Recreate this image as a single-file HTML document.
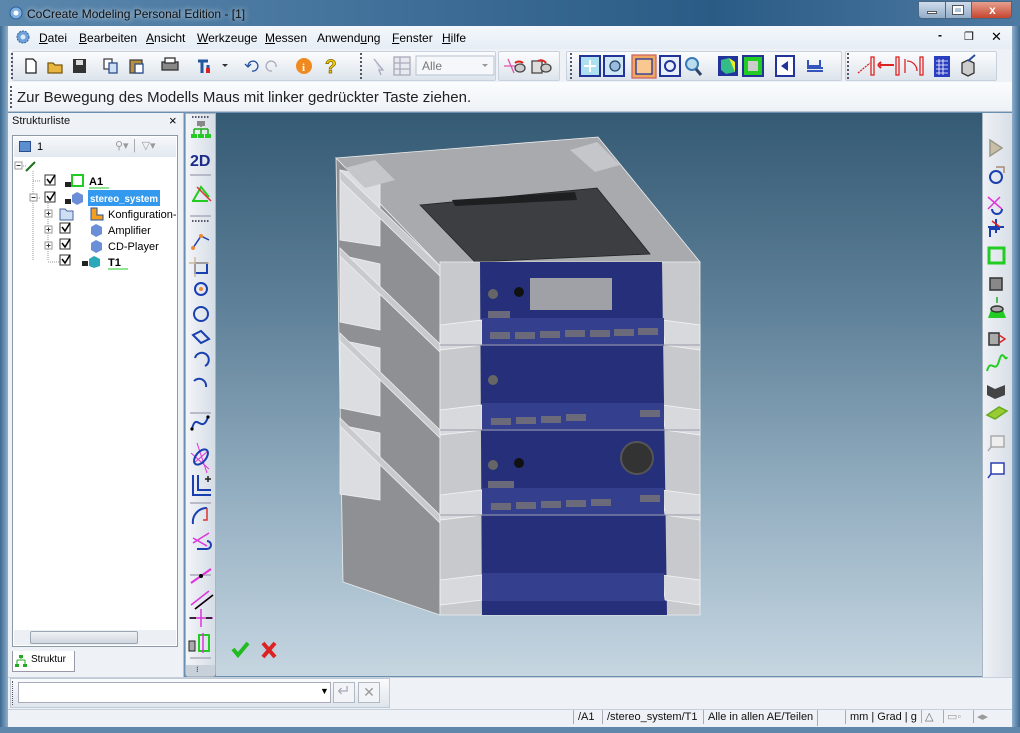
<!DOCTYPE html>
<html><head><meta charset="utf-8"><style>
*{margin:0;padding:0;box-sizing:border-box}
body{width:1020px;height:733px;overflow:hidden;font-family:"Liberation Sans",sans-serif;font-size:12px;background:#6a8fb0;position:relative}
.a{position:absolute}
.title{left:0;top:0;width:1020px;height:27px;background:linear-gradient(90deg,#5b87ad 0%,#3f6f98 40%,#2a5b86 70%,#4d7aa2 100%)}
.menu{left:8px;top:26px;width:1004px;height:23px;background:linear-gradient(#f4f8fc,#e6edf5);font-size:12px}
.menu span{position:absolute;top:5px}
.tb{left:8px;top:49px;width:1004px;height:33px;background:#eef2f7}
.tbi{top:51px;height:30px;background:linear-gradient(#fbfcfd,#dde4ec);border:1px solid #c8d2de;border-radius:2px}
.msg{left:8px;top:82px;width:1004px;height:30px;background:linear-gradient(#fafcfe,#eef2f6);border-bottom:1px solid #b7c3d0;font-size:15px;color:#222}
.vp{left:216px;top:113px;width:766px;height:563px;background:linear-gradient(#355a74 0%,#5f8199 35%,#97b1c3 70%,#c6d6e1 100%)}
</style></head><body>
<div class="a title"></div>
<svg class="a" style="left:8px;top:5px" width="16" height="16"><circle cx="8" cy="8" r="6" fill="#7fb0e0" stroke="#2d5f9c"/><circle cx="8" cy="8" r="2.5" fill="#fff"/></svg>
<div class="a" style="left:27px;top:7px;color:#111;font-size:12px;text-shadow:0 0 6px #fff">CoCreate Modeling Personal Edition - [1]</div>
<div class="a" style="left:918px;top:1px;width:94px;height:18px;border-radius:0 0 4px 4px;overflow:hidden;border:1px solid #4a6680">
<div class="a" style="left:0;top:0;width:26px;height:17px;background:linear-gradient(#cfdceb,#8eaac6)"></div>
<div class="a" style="left:26px;top:0;width:26px;height:17px;background:linear-gradient(#cfdceb,#8eaac6);border-left:1px solid #4a6680"></div>
<div class="a" style="left:52px;top:0;width:42px;height:17px;background:linear-gradient(#e6a08e,#c4402a);border-left:1px solid #4a6680;color:#fff;text-align:center;font-weight:bold;font-size:12px;line-height:16px">x</div>
<div class="a" style="left:8px;top:9px;width:10px;height:3px;background:#fff;border:1px solid #555"></div>
<div class="a" style="left:34px;top:4px;width:10px;height:8px;border:2px solid #fff;outline:1px solid #555"></div>
</div>
<div class="a" style="left:0;top:26px;width:8px;height:707px;background:linear-gradient(90deg,#3d6a92,#8eaecb)"></div>
<div class="a" style="left:1012px;top:26px;width:8px;height:707px;background:linear-gradient(90deg,#8eaecb,#3d6a92)"></div>
<div class="a" style="left:0;top:727px;width:1020px;height:6px;background:#5f86ab"></div>

<div class="a menu">
<svg class="a" style="left:6px;top:3px" width="18" height="17"><circle cx="9" cy="8" r="6" fill="#6fa0d8" stroke="#2d5f9c" stroke-dasharray="2 1"/><circle cx="9" cy="8" r="2.5" fill="#dce9f8"/></svg>
<span style="left:31px"><u>D</u>atei</span><span style="left:71px"><u>B</u>earbeiten</span><span style="left:138px"><u>A</u>nsicht</span><span style="left:189px"><u>W</u>erkzeuge</span><span style="left:257px"><u>M</u>essen</span><span style="left:309px">Anwend<u>u</u>ng</span><span style="left:384px"><u>F</u>enster</span><span style="left:434px"><u>H</u>ilfe</span>
<span style="left:930px;top:2px;font-weight:bold">-</span><span style="left:956px;top:4px;font-size:11px">&#x2750;</span><span style="left:983px;top:3px;font-size:13px">&#x2715;</span>
</div>
<div class="a tb"></div>
<div class="a tbi" style="left:12px;width:484px"></div>
<div class="a tbi" style="left:498px;width:62px"></div>
<div class="a tbi" style="left:566px;width:276px"></div>
<div class="a tbi" style="left:845px;width:152px"></div>
<svg class="a" style="left:12px;top:51px" width="990" height="30">
<g fill="none" stroke-width="1.3">
<path d="M14 8h7l3 3v11h-10z" stroke="#222" fill="#fff"/>
<path d="M36 12h5l2 2h7v8h-14z" fill="#e8b63e" stroke="#7a5a10"/>
<rect x="61" y="8" width="13" height="14" fill="#333"/><rect x="64" y="9" width="7" height="5" fill="#ddd"/>
<rect x="92" y="8" width="8" height="10" fill="#fff" stroke="#444"/><rect x="97" y="12" width="8" height="10" fill="#cfe0f4" stroke="#2a4d8a"/>
<rect x="118" y="9" width="12" height="13" fill="#b98f3e" stroke="#444"/><rect x="123" y="13" width="8" height="9" fill="#fff" stroke="#2a4d8a"/>
<rect x="150" y="11" width="16" height="8" fill="#888" stroke="#333"/><rect x="153" y="7" width="10" height="5" fill="#fff" stroke="#333"/>
<path d="M186 10h10M190 10v12M196 14v8" stroke="#2355a0" stroke-width="3"/><rect x="194" y="17" width="4" height="5" fill="#d22" stroke="none"/>
<path d="M210 13l3 3 3-3z" fill="#333" stroke="none"/>
<path d="M236 16a5 5 0 1 1 4 4M233 13l3 3 3-3" stroke="#2450a0"/>
<path d="M264 16a5 5 0 1 0 -4 4" stroke="#aab"/>
<circle cx="292" cy="15" r="8" fill="#f08a20"/><text x="290" y="20" font-size="11" font-weight="bold" fill="#fff" font-family="Liberation Serif">i</text>
<text x="313" y="22" font-size="19" font-weight="bold" fill="#f0d000" stroke="#806000" stroke-width=".7">?</text>
<path d="M362 8l9 11h-4l2 5" stroke="#aab" fill="#dde"/>
<rect x="382" y="6" width="16" height="18" fill="#e7ebef" stroke="#aab"/>
<path d="M382 12h16M382 18h16M388 6v18" stroke="#aab"/>
</g>
<rect x="404" y="5" width="78" height="19" fill="#f5f7fa" stroke="#b9c3cf"/>
<text x="410" y="19" font-size="12" fill="#777" font-family="Liberation Sans">Alle</text>
<path d="M470 13l3 3 3-3z" fill="#999"/>
<g fill="none" stroke-width="1.3">
<path d="M496 8l6 14M492 15h14" stroke="#d5a" /><ellipse cx="508" cy="17" rx="5" ry="4" fill="#ccc" stroke="#444"/><path d="M503 12a6 6 0 0 1 8 0" stroke="#d22" stroke-width="2"/>
<path d="M520 10h10v12h-10z" fill="#ddd" stroke="#444"/><ellipse cx="534" cy="17" rx="5" ry="4" fill="#ccc" stroke="#444"/><path d="M526 10a6 6 0 0 1 8 2" stroke="#d22" stroke-width="2"/>
<rect x="568" y="5" width="20" height="20" fill="#aee0f0" stroke="#22339a" stroke-width="2"/><path d="M578 9v12M572 15h12" stroke="#fff" stroke-width="2"/>
<rect x="592" y="5" width="20" height="20" fill="#cfe6f4" stroke="#22339a" stroke-width="2"/><circle cx="603" cy="15" r="5" fill="#9bd" stroke="#246"/>
<rect x="620" y="4" width="24" height="23" fill="#f0a860" stroke="#c66"/><rect x="624" y="8" width="16" height="15" fill="#f8c890" stroke="#22339a"/>
<rect x="648" y="5" width="20" height="20" fill="#e8f0fa" stroke="#22339a" stroke-width="2"/><path d="M653 15a5 5 0 0 1 10 0M663 15a5 5 0 0 1 -10 0" stroke="#22339a" stroke-width="2"/>
<circle cx="680" cy="13" r="6" fill="#bde" stroke="#3a7ab8" stroke-width="2"/><path d="M684 18l5 6" stroke="#346" stroke-width="3"/>
<rect x="706" y="5" width="20" height="20" fill="#22339a"/><path d="M709 9l8-2 6 4v10l-9 2-5-4z" fill="#3b8"/><path d="M717 7l6 4v10" fill="#ee2"/>
<rect x="731" y="5" width="20" height="20" fill="#22cc22" stroke="#22339a" stroke-width="2"/><rect x="736" y="10" width="10" height="10" fill="#ccc"/>
<rect x="764" y="5" width="18" height="20" fill="#fff" stroke="#22339a" stroke-width="2"/><path d="M776 10v10l-7-5z" fill="#22339a"/>
<path d="M796 9v6h12v-6M795 17h16M795 20h16" stroke="#3355bb" stroke-width="2"/>
<path d="M846 22l12-10M860 6v18" stroke="#d22" stroke-dasharray="2 1"/><rect x="859" y="6" width="3" height="18" fill="#eee" stroke="#d22"/>
<path d="M868 14h14M866 14l3-3M866 14l3 3" stroke="#d22" stroke-width="2"/><rect x="884" y="6" width="3" height="18" fill="#eee" stroke="#d22"/>
<path d="M893 8v14M895 10a10 10 0 0 1 10 10" stroke="#d22"/><rect x="908" y="6" width="3" height="18" fill="#eee" stroke="#d22"/>
<rect x="922" y="5" width="16" height="21" fill="#2a3fc0"/><path d="M924 10h12M924 14h12M924 18h12M924 22h12M927 8v16M931 8v16" stroke="#fff" stroke-width=".8"/>
<path d="M950 12l6-3 6 3v10l-6 3-6-3z" fill="#ccc" stroke="#333"/><path d="M956 10l7-6" stroke="#2a4d9a" stroke-width="2"/>
</g>
</svg>
<div class="a" style="left:11px;top:53px;height:26px;border-left:2px dotted #556"></div>
<div class="a" style="left:360px;top:53px;height:26px;border-left:2px dotted #556"></div>
<div class="a" style="left:570px;top:53px;height:26px;border-left:2px dotted #556"></div>
<div class="a" style="left:847px;top:53px;height:26px;border-left:2px dotted #556"></div>
<div class="a msg"><div class="a" style="left:2px;top:4px;height:22px;border-left:2px dotted #556"></div><div class="a" style="left:9px;top:7px">Zur Bewegung des Modells Maus mit linker gedrückter Taste ziehen.</div></div>

<!-- left panel -->
<div class="a" style="left:8px;top:113px;width:176px;height:564px;background:#eef2f7;border-right:1px solid #b7c3d0"></div>
<div class="a" style="left:12px;top:115px;font-size:11px;color:#111">Strukturliste</div>
<div class="a" style="left:169px;top:113px;font-size:13px">×</div>
<div class="a" style="left:12px;top:135px;width:166px;height:512px;background:#fff;border:1px solid #8c9aa8"></div>
<div class="a" style="left:14px;top:137px;width:162px;height:20px;background:linear-gradient(#f6f8fb,#e2e8ef)"></div>
<div class="a" style="left:19px;top:141px;width:12px;height:11px;background:#5b8fd0;border:1px solid #2a4d8a"></div>
<div class="a" style="left:37px;top:141px;font-size:11px">1</div>
<div class="a" style="left:115px;top:139px;font-size:11px;color:#999">⚲▾ │ ▽▾</div>
<svg class="a" style="left:12px;top:157px" width="166" height="115" font-family="Liberation Sans" font-size="11">
<g stroke="#999" stroke-dasharray="1 1" fill="none"><path d="M9 9h6M21 14v90M21 24h8M21 41h8M36 46v58M36 57h2M36 73h2M36 89h2M36 105h17"/></g>
<rect x="3" y="5" width="7" height="7" fill="#fff" stroke="#999"/><path d="M4.5 8.5h4" stroke="#333"/>
<path d="M14 14l9-9" stroke="#207020" stroke-width="2"/>
<rect x="33" y="18" width="10" height="10" fill="#fff" stroke="#333"/><path d="M35 22l3 4 5-8" stroke="#000" fill="none" stroke-width="1.5"/>
<rect x="53" y="25" width="6" height="5" fill="#222"/><rect x="60" y="18" width="11" height="11" fill="none" stroke="#2c2" stroke-width="2"/>
<text x="77" y="28" font-weight="bold">A1</text><path d="M77 31h20" stroke="#2c2"/>
<rect x="18" y="37" width="7" height="7" fill="#fff" stroke="#999"/><path d="M19.5 40.5h4" stroke="#333"/>
<rect x="33" y="35" width="10" height="10" fill="#fff" stroke="#333"/><path d="M35 39l3 4 5-8" stroke="#000" fill="none" stroke-width="1.5"/>
<rect x="53" y="42" width="6" height="5" fill="#222"/><path d="M60 38l5-3 6 3v7l-6 3-5-3z" fill="#6a8fd8"/>
<rect x="76" y="33" width="72" height="16" fill="#3399ee"/><text x="78" y="45" fill="#fff" font-weight="bold" font-size="10.5" textLength="68" lengthAdjust="spacingAndGlyphs">stereo_system</text>
<g fill="#fff" stroke="#999"><rect x="33" y="53" width="7" height="7"/><rect x="33" y="69" width="7" height="7"/><rect x="33" y="85" width="7" height="7"/></g>
<path d="M34.5 56.5h4M36.5 54.5v4M34.5 72.5h4M36.5 70.5v4M34.5 88.5h4M36.5 86.5v4" stroke="#333"/>
<path d="M48 52h5l2 2h6v9h-13z" fill="#cfdff3" stroke="#4466a0"/>
<rect x="48" y="66" width="10" height="10" fill="#fff" stroke="#333"/><path d="M50 70l3 4 5-8" stroke="#000" fill="none" stroke-width="1.5"/>
<rect x="48" y="82" width="10" height="10" fill="#fff" stroke="#333"/><path d="M50 86l3 4 5-8" stroke="#000" fill="none" stroke-width="1.5"/>
<rect x="48" y="98" width="10" height="10" fill="#fff" stroke="#333"/><path d="M50 102l3 4 5-8" stroke="#000" fill="none" stroke-width="1.5"/>
<path d="M79 51h6v7h6v5h-12z" fill="#f3a020" stroke="#2050a0"/>
<path d="M79 70l5-3 6 3v7l-6 3-5-3z" fill="#6a8fd8"/><path d="M79 86l5-3 6 3v7l-6 3-5-3z" fill="#6a8fd8"/>
<text x="96" y="61">Konfiguration-</text><text x="96" y="77">Amplifier</text><text x="96" y="93">CD-Player</text>
<rect x="70" y="104" width="6" height="5" fill="#222"/><path d="M77 102l5-3 6 3v7l-6 2-5-2z" fill="#2aa7b8"/>
<text x="96" y="109" font-weight="bold">T1</text><path d="M96 112h20" stroke="#2c2"/>
</svg>
<div class="a" style="left:14px;top:630px;width:162px;height:15px;background:#eceff3"></div>
<div class="a" style="left:30px;top:631px;width:108px;height:13px;background:linear-gradient(#f0f3f6,#cfd6de);border:1px solid #9aa6b2;border-radius:2px"></div>
<div class="a" style="left:12px;top:651px;width:63px;height:21px;background:#fff;border:1px solid #99a;border-top:none;font-size:10px;padding:3px 0 0 18px">Struktur</div>
<svg class="a" style="left:14px;top:654px" width="14" height="14"><path d="M7 1v4M3 6h8M3 6v4M11 6v4" stroke="#2a2" fill="none"/><rect x="5" y="1" width="4" height="3" fill="#2a2"/><rect x="1" y="10" width="4" height="3" fill="#2a2"/><rect x="9" y="10" width="4" height="3" fill="#2a2"/></svg>

<!-- vertical toolbar -->
<div class="a" style="left:185px;top:113px;width:31px;height:564px;background:linear-gradient(90deg,#f3f5f8,#d6dde6);border:1px solid #aab5c2;border-radius:0 0 4px 4px"></div>
<svg class="a" style="left:185px;top:113px" width="31" height="564" fill="none" stroke-width="1.5">
<path d="M7 4h17M7 108h17" stroke="#556" stroke-dasharray="1.5 1.5" stroke-width="2"/>
<path d="M16 10v4M9 16h14M9 16v5M23 16v5M16 16v5" stroke="#2a2"/><rect x="12" y="8" width="8" height="5" fill="#888" stroke="none"/><rect x="6" y="21" width="6" height="4" fill="#2c2" stroke="none"/><rect x="13" y="21" width="6" height="4" fill="#2c2" stroke="none"/><rect x="20" y="21" width="6" height="4" fill="#2c2" stroke="none"/>
<text x="5" y="53" font-size="16" font-weight="bold" fill="#1c2b8a" stroke="none" font-family="Liberation Sans">2D</text>
<path d="M5 62h21M5 103h21" stroke="#aab"/>
<path d="M8 88l8-14 8 10M7 88h16" stroke="#2c2" stroke-width="2"/><path d="M12 74l14 14" stroke="#d33"/>
<path d="M8 135l8-12 8 4" stroke="#1a3fb0"/><circle cx="8" cy="135" r="2" fill="#e83"/><circle cx="16" cy="123" r="2" fill="#e83"/>
<rect x="10" y="150" width="12" height="10" stroke="#1a3fb0" stroke-width="2"/><path d="M10 144v20M4 150h20" stroke="#cb9"/>
<circle cx="16" cy="176" r="6" stroke="#1a3fb0" stroke-width="2"/><circle cx="16" cy="176" r="2" fill="#e83"/>
<circle cx="16" cy="201" r="7" stroke="#1a3fb0" stroke-width="2"/>
<path d="M8 222l8 8 8-4-8-8z" stroke="#1a3fb0" stroke-width="2"/>
<path d="M10 245a7 7 0 1 1 10 8" stroke="#1a3fb0" stroke-width="2"/>
<path d="M9 268a7 7 0 0 1 12 6" stroke="#1a3fb0" stroke-width="2"/>
<path d="M5 300h21M5 390h21M5 462h21" stroke="#aab"/>
<path d="M7 316c4-18 10 6 16-12" stroke="#1a3fb0" stroke-width="2"/><circle cx="7" cy="316" r="1.6" fill="#000"/><circle cx="23" cy="304" r="1.6" fill="#000"/>
<path d="M9 350l14-12M6 340l18 16M12 330l10 30" stroke="#d3d" stroke-width="1"/><ellipse cx="16" cy="344" rx="5" ry="9" transform="rotate(40 16 344)" stroke="#1a3fb0" stroke-width="2"/>
<path d="M8 362v20h18M13 362v15h13" stroke="#1a3fb0" stroke-width="2"/><path d="M20 366h6M23 363v6" stroke="#222"/>
<path d="M8 411a14 14 0 0 1 14-16" stroke="#1a3fb0" stroke-width="2"/><path d="M22 395v12h-4" stroke="#d33"/>
<path d="M8 430l16-10M8 425l14 8" stroke="#d3d"/><path d="M12 436h10a4 4 0 0 0 0-8" stroke="#1a3fb0" stroke-width="2"/>
<path d="M6 470l20-14" stroke="#d3d" stroke-width="2"/><circle cx="16" cy="463" r="2" fill="#000"/>
<path d="M6 492l18-14M10 496l18-14" stroke="#d3d"/><path d="M10 496l18-14" stroke="#000"/>
<path d="M16 496v18M4 505h24" stroke="#d3d"/><path d="M5 505h6M21 505h6" stroke="#000"/>
<rect x="4" y="528" width="6" height="10" fill="#aaa" stroke="#222" stroke-width="1"/><path d="M14 522h10v16h-10z" stroke="#2c2" stroke-width="2"/><path d="M18 520v20" stroke="#d3d"/>
<path d="M5 545h21" stroke="#aab"/>
</svg>
<div class="a" style="left:186px;top:665px;width:29px;height:11px;background:#c8d0da;font-size:8px;padding-left:10px">⁝</div>

<!-- viewport -->
<div class="a vp"></div>
<svg class="a" style="left:216px;top:113px" width="766" height="563">
<g transform="translate(-216,-113)" stroke="#eee" stroke-width=".8">
<polygon points="336,158 598,137 700,262 440,266" fill="#a9aaad"/>
<polygon points="336,158 440,266 440,615 343,582" fill="#8e9094"/>
<polygon points="340,170 380,178 380,246 340,240" fill="#dcdde0"/>
<polygon points="340,255 380,264 380,330 340,322" fill="#dcdde0"/>
<polygon points="340,340 380,348 380,416 340,408" fill="#dcdde0"/>
<polygon points="340,425 380,433 380,500 340,494" fill="#dcdde0"/>
<polygon points="340,170 440,266 440,276 340,180" fill="#c9cacd"/>
<polygon points="340,248 440,344 440,352 340,256" fill="#c9cacd"/>
<polygon points="340,333 440,430 440,438 340,341" fill="#c9cacd"/>
<polygon points="340,418 440,515 440,523 340,426" fill="#c9cacd"/>
<polygon points="420,205 597,188 650,254 475,262" fill="#3c3e41" stroke="#222"/>
<polygon points="452,200 575,192 577,200 455,206" fill="#1e1f21" stroke="none"/>
<polygon points="570,150 597,142 620,165 595,172" fill="#c5c6c9" stroke="none"/>
<polygon points="345,168 375,160 395,180 365,188" fill="#c5c6c9" stroke="none"/>
<polygon points="440,262 700,262 700,615 440,615" fill="#c8c9cc"/>
<polygon points="480,262 662,262 667,615 482,615" fill="#26307a" stroke="none"/>
<g fill="#d8d9dc" stroke="#f4f4f4">
<polygon points="440,325 482,320 482,345 440,350"/><polygon points="662,320 700,325 700,350 665,345"/>
<polygon points="440,410 482,405 482,430 440,435"/><polygon points="662,405 700,410 700,435 665,430"/>
<polygon points="440,495 482,490 482,515 440,520"/><polygon points="662,490 700,495 700,520 665,515"/>
<polygon points="440,580 482,575 482,600 440,605"/><polygon points="662,575 700,580 700,605 665,600"/>
</g>
<g fill="#34408e" stroke="none"><rect x="482" y="318" width="182" height="28"/><rect x="482" y="403" width="182" height="28"/><rect x="482" y="488" width="182" height="28"/><rect x="482" y="573" width="182" height="28"/></g>
<g stroke="#99a" stroke-width="1" fill="none"><path d="M440,345h260M440,430h260M440,515h260"/></g>
<rect x="530" y="278" width="82" height="32" fill="#9fa1a6" stroke="none"/>
<circle cx="493" cy="294" r="5" fill="#666" stroke="none"/><circle cx="519" cy="292" r="5" fill="#111" stroke="none"/>
<circle cx="493" cy="380" r="5" fill="#666" stroke="none"/>
<circle cx="493" cy="465" r="5" fill="#666" stroke="none"/><circle cx="519" cy="463" r="5" fill="#111" stroke="none"/>
<circle cx="637" cy="458" r="16" fill="#333" stroke="#555" stroke-width="2"/>
<g fill="#6a6a7a" stroke="none">
<rect x="488" y="311" width="22" height="7"/><rect x="490" y="332" width="20" height="7"/><rect x="515" y="332" width="20" height="7"/><rect x="540" y="331" width="20" height="7"/><rect x="565" y="330" width="20" height="7"/><rect x="590" y="330" width="20" height="7"/><rect x="614" y="329" width="20" height="7"/><rect x="638" y="328" width="20" height="7"/>
<rect x="491" y="418" width="20" height="7"/><rect x="516" y="417" width="20" height="7"/><rect x="541" y="416" width="20" height="7"/><rect x="566" y="414" width="20" height="7"/><rect x="640" y="410" width="20" height="7"/>
<rect x="488" y="481" width="26" height="7"/><rect x="491" y="503" width="20" height="7"/><rect x="516" y="502" width="20" height="7"/><rect x="541" y="501" width="20" height="7"/><rect x="566" y="500" width="20" height="7"/><rect x="591" y="499" width="20" height="7"/><rect x="640" y="495" width="20" height="7"/>
</g>
</g>
<path d="M17 536l5 6 10-12" stroke="#22bb22" stroke-width="4" fill="none"/>
<path d="M47 530l12 14M59 530l-12 14" stroke="#dd2222" stroke-width="4"/>
</svg>

<!-- right toolbar -->
<div class="a" style="left:982px;top:113px;width:30px;height:564px;background:linear-gradient(90deg,#eef1f5,#d8dfe7);border-left:1px solid #aab5c2"></div>
<svg class="a" style="left:982px;top:113px" width="30" height="380" fill="none" stroke-width="1.5">
<path d="M8 27l12 8-12 8z" fill="#c9bda8" stroke="#998"/>
<circle cx="14" cy="64" r="6" stroke="#1a3fb0" stroke-width="2"/><path d="M14 54h8v6" stroke="#a87"/>
<path d="M6 84l14 12M18 84l-12 12" stroke="#d3d"/><path d="M10 96a5 5 0 0 0 10 0" stroke="#1a3fb0" stroke-width="2"/>
<path d="M14 106v14M6 114h16M8 124v-8h10" stroke="#1a3fb0" stroke-width="2"/><path d="M10 108l8 6" stroke="#d22"/>
<rect x="7" y="135" width="15" height="15" stroke="#2c2" stroke-width="3"/>
<path d="M8 165h12v12h-12z" fill="#888" stroke="#333"/>
<path d="M6 205h18l-3-8h-12z" fill="#2c2"/><ellipse cx="15" cy="196" rx="6" ry="3" fill="#aaa" stroke="#333"/><path d="M15 190v-6" stroke="#2a2"/>
<path d="M7 220h10v12h-10z" fill="#aaa" stroke="#333"/><path d="M17 222l6 4-6 4" stroke="#d22"/>
<path d="M5 258c4-14 8 4 12-10s6 2 8-4" stroke="#2c2" stroke-width="2"/>
<path d="M5 272l8 4 10-4v10l-10 4-8-4z" fill="#444"/>
<path d="M5 302l12-8 8 4-12 8z" fill="#9c3" stroke="#6a2"/>
<rect x="9" y="323" width="13" height="11" fill="#eee" stroke="#aaa"/><path d="M9 334l-3 4" stroke="#aaa"/>
<rect x="9" y="350" width="13" height="11" fill="#fff" stroke="#2a3fb0"/><path d="M9 361l-3 4" stroke="#2a3fb0"/>
</svg>

<!-- bottom -->
<div class="a" style="left:8px;top:677px;width:1004px;height:32px;background:#eef2f7;border-top:1px solid #c6d0db"></div>
<div class="a" style="left:10px;top:678px;width:380px;height:30px;background:linear-gradient(#fafbfd,#dfe5ec);border:1px solid #c0cad5"></div>
<div class="a" style="left:12px;top:681px;height:24px;border-left:1px dotted #556"></div>
<div class="a" style="left:18px;top:682px;width:313px;height:21px;background:#fff;border:1px solid #aab"></div>
<div class="a" style="left:320px;top:686px;font-size:9px">▼</div>
<div class="a" style="left:333px;top:682px;width:22px;height:21px;background:#f2f4f7;border:1px solid #b0b8c2;color:#aab;font-size:16px;text-align:center;line-height:18px">↵</div>
<div class="a" style="left:358px;top:682px;width:22px;height:21px;background:#f2f4f7;border:1px solid #b0b8c2;color:#999;font-size:14px;text-align:center;line-height:19px">✕</div>
<div class="a" style="left:8px;top:709px;width:1004px;height:18px;background:#eef1f5;border-top:1px solid #c6d0db"></div>
<div class="a" style="top:710px;left:573px;height:16px;font-size:11px;color:#111;white-space:nowrap">
<span class="a" style="left:0;padding:1px 4px;border-left:1px solid #aab">/A1</span>
<span class="a" style="left:29px;padding:1px 4px;border-left:1px solid #aab">/stereo_system/T1</span>
<span class="a" style="left:130px;padding:1px 4px;border-left:1px solid #aab">Alle in allen AE/Teilen</span>
<span class="a" style="left:244px;width:32px;height:16px;border-left:1px solid #aab"></span>
<span class="a" style="left:272px;padding:1px 4px;border-left:1px solid #aab">mm | Grad | g</span>
<span class="a" style="left:348px;padding:0 3px;border-left:1px solid #aab;color:#666">△</span>
<span class="a" style="left:370px;padding:0 3px;border-left:1px solid #aab;color:#999">▭◦</span>
<span class="a" style="left:400px;padding:0 3px;border-left:1px solid #aab;color:#999">◂▸</span>
</div>
</body></html>
